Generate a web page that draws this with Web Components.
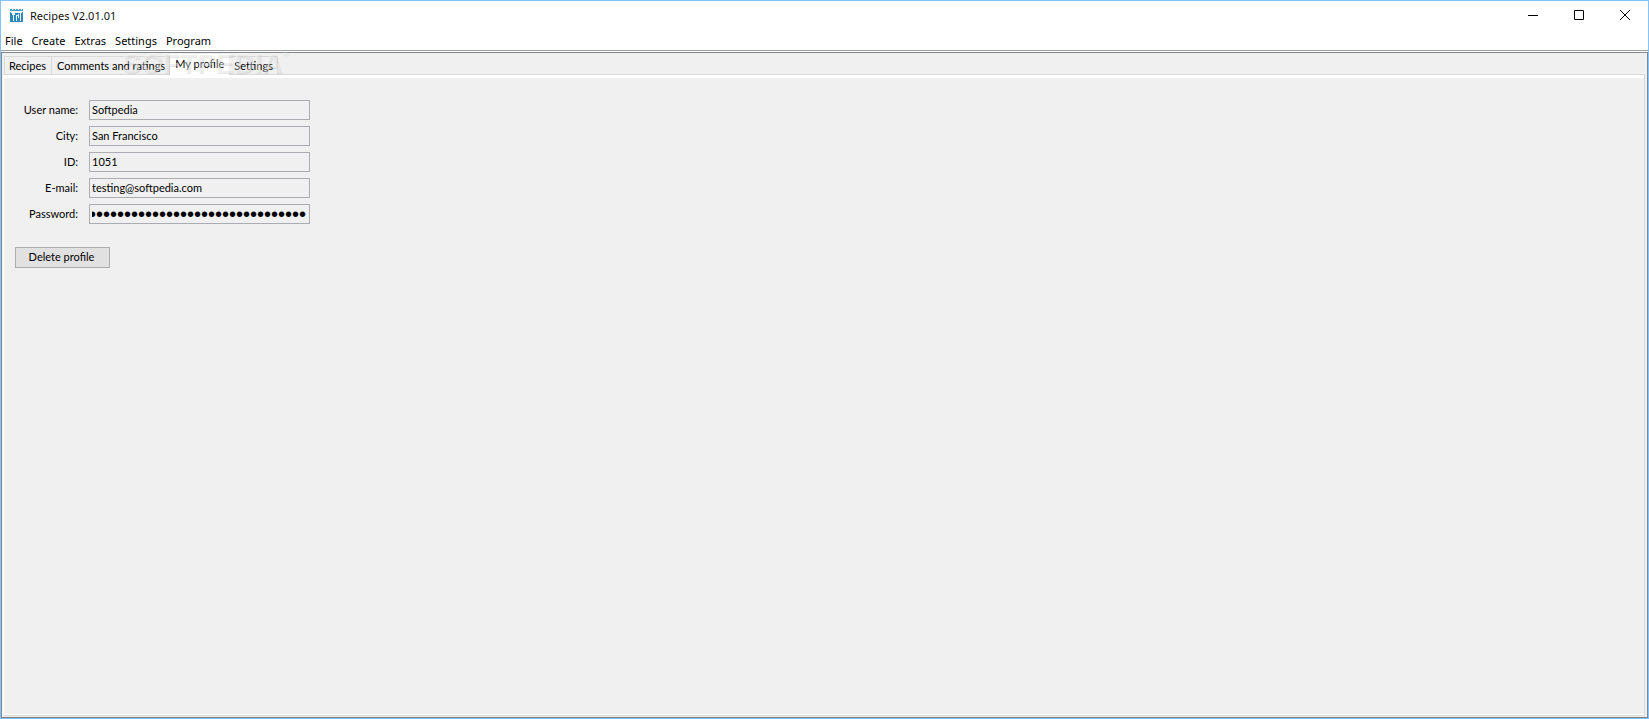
<!DOCTYPE html>
<html lang="en">
<head>
<meta charset="utf-8">
<title>Recipes V2.01.01</title>
<style>
html, body { height: 100%; margin: 0; }
body { font: 11px/16px "Noto Sans", sans-serif; color: #000; }
</style>
</head>
<body>
<app-window>
  <title-bar slot="title">Recipes V2.01.01</title-bar>
  <menu-bar slot="menu">
    <menu-item>File</menu-item>
    <menu-item>Create</menu-item>
    <menu-item>Extras</menu-item>
    <menu-item>Settings</menu-item>
    <menu-item>Program</menu-item>
  </menu-bar>
  <tab-panel>
    <tab-item slot="tabs">Recipes</tab-item>
    <tab-item slot="tabs">Comments and ratings</tab-item>
    <tab-item slot="tabs" selected>My profile</tab-item>
    <tab-item slot="tabs">Settings</tab-item>
    <water-mark slot="mark">SOFTPEDIA</water-mark>
    <profile-form></profile-form>
  </tab-panel>
</app-window>

<script>
function define(name, html, init) {
  const template = document.createElement('template');
  template.innerHTML = html;
  customElements.define(name, class extends HTMLElement {
    connectedCallback() {
      if (this.shadowRoot) return;
      this.attachShadow({ mode: 'open' }).append(template.content.cloneNode(true));
      if (init) init(this, this.shadowRoot);
    }
  });
}

define('app-window', `
<style>
:host { display: flex; flex-direction: column; box-sizing: border-box; min-height: 100vh; border: 1px solid #84c3f7; background: #fff; }
main { flex: 1; display: flex; margin-top: 1px; border: 1px solid #828790; border-bottom-color: #808080; background: #f0f0f0; padding: 1px 2px 1px 1px; }
main ::slotted(*) { flex: 1; }
</style>
<slot name="title"></slot>
<slot name="menu"></slot>
<main><slot></slot></main>`);

define('title-bar', `
<style>
:host { display: flex; align-items: center; height: 29px; padding-left: 9px; color: #111; }
.name { flex: 1; margin-left: 7px; }
button { display: grid; place-items: center; width: 46px; height: 29px; padding: 0; border: 0; background: none; }
svg { display: block; }
</style>
<svg width="13" height="13" viewBox="0 0 13 13" aria-hidden="true">
  <path fill="#4a9cc8" d="M0 0h2v1h1V0h2v1h1V0h2v1h1V0h2v1h1V0h1v2H0z"/>
  <path fill="#2e88ba" d="M0 3h1v1h11V3h1v10H0z"/>
  <path fill="#e8f5fb" d="M2 4h3v2H4v6H3V6H2zM6 6h2v1H7v5H6zM8 5h1v4H8zM10 4h1v8h-1z"/>
</svg>
<span class="name"><slot></slot></span>
<button type="button" aria-label="Minimize"><svg width="11" height="11"><path d="M0 5.5h10" stroke="#000" fill="none"/></svg></button>
<button type="button" aria-label="Maximize"><svg width="11" height="11"><path d="M.5 .5h9v9h-9z" stroke="#000" fill="none"/></svg></button>
<button type="button" aria-label="Close"><svg width="11" height="11"><path d="M0 0l10 10M10 0L0 10" stroke="#000" fill="none"/></svg></button>`);

define('menu-bar', `
<style>
:host { display: flex; gap: 9px; align-items: center; height: 20px; padding: 0 4px; border-bottom: 1px solid #a0a0a0; }
</style>
<slot></slot>`, el => el.setAttribute('role', 'menubar'));

define('menu-item', `
<style>
:host { display: block; }
button { display: block; font: inherit; color: inherit; padding: 1px 0 0; border: 0; background: none; }
</style>
<button type="button" role="menuitem"><slot></slot></button>`);

define('tab-panel', `
<style>
:host { display: flex; flex-direction: column; position: relative; }
nav { display: flex; align-items: flex-end; height: 20px; padding-left: 1px; }
section { flex: 1; border: 1px solid #d9d9d9; border-left-color: #fff; background: #f0f0f0; box-shadow: inset 0 3px #fff, inset 0 -1px #fff; }
</style>
<nav role="tablist"><slot name="tabs"></slot></nav>
<section><slot></slot></section>
<slot name="mark"></slot>`);

define('tab-item', `
<style>
:host { display: block; }
button { display: block; box-sizing: border-box; height: 18px; padding: 0 4px 0 5px; border: 1px solid #d9d9d9; border-width: 1px 1px 0 0; background: #f0f0f0; color: #000; font: 11px/18px Lato, sans-serif; }
:host(:first-child) button { padding: 0 5px 0 4px; border-left-width: 1px; }
:host([selected]) button { height: 21px; margin-bottom: -1px; padding: 0 4px 2px 5px; border-color: #fff; background: #fff; }
:host([selected]) { position: relative; }
</style>
<button type="button" role="tab"><slot></slot></button>`,
(el, root) => root.querySelector('button').setAttribute('aria-selected', el.hasAttribute('selected')));

define('water-mark', `
<style>
:host { position: absolute; left: 119px; top: -5px; display: flex; align-items: flex-start; pointer-events: none; color: rgba(255,255,255,.4); font: bold 28px/30px "Liberation Sans", sans-serif; text-shadow: 1px 1px 1px rgba(0,0,0,.1); }
small { font: 8px/12px "Liberation Sans", sans-serif; }
</style>
<slot></slot><small>®</small>`);

define('profile-form', `
<style>
:host { display: block; padding: 25px 11px; font: 11px/16px Lato, sans-serif; }
form { display: grid; gap: 23px; justify-items: start; }
.fields { display: grid; gap: 6px; }
button { height: 21px; width: 95px; padding: 0 2px 2px 0; border: 1px solid #adadad; background: #e1e1e1; color: #000; font: inherit; }
</style>
<form>
  <div class="fields">
    <profile-field label="User name:" value="Softpedia"></profile-field>
    <profile-field label="City:" value="San Francisco"></profile-field>
    <profile-field label="ID:" value="1051"></profile-field>
    <profile-field label="E-mail:" value="testing@softpedia.com"></profile-field>
    <profile-field label="Password:" type="password" value="0000000000000000000000000000000"></profile-field>
  </div>
  <button type="button">Delete profile</button>
</form>`);

define('profile-field', `
<style>
:host { display: grid; grid-template-columns: 63px 221px; column-gap: 11px; align-items: center; }
label { text-align: right; }
input { box-sizing: border-box; width: 100%; height: 20px; margin: 0; padding: 0 2px 2px; border: 1px solid #abadb3; border-radius: 0; outline: 0; background: #f0f0f0; color: #000; font: inherit; }
input[type=password] { padding: 0 3px 0 2px; font: 20px/18px "Liberation Sans", sans-serif; }
</style>
<label for="field"></label><input id="field" readonly>`,
(el, root) => {
  const input = root.querySelector('input');
  root.querySelector('label').textContent = el.getAttribute('label');
  input.type = el.getAttribute('type') || 'text';
  input.value = el.getAttribute('value');
  input.scrollLeft = input.scrollWidth;
});
</script>
</body>
</html>
